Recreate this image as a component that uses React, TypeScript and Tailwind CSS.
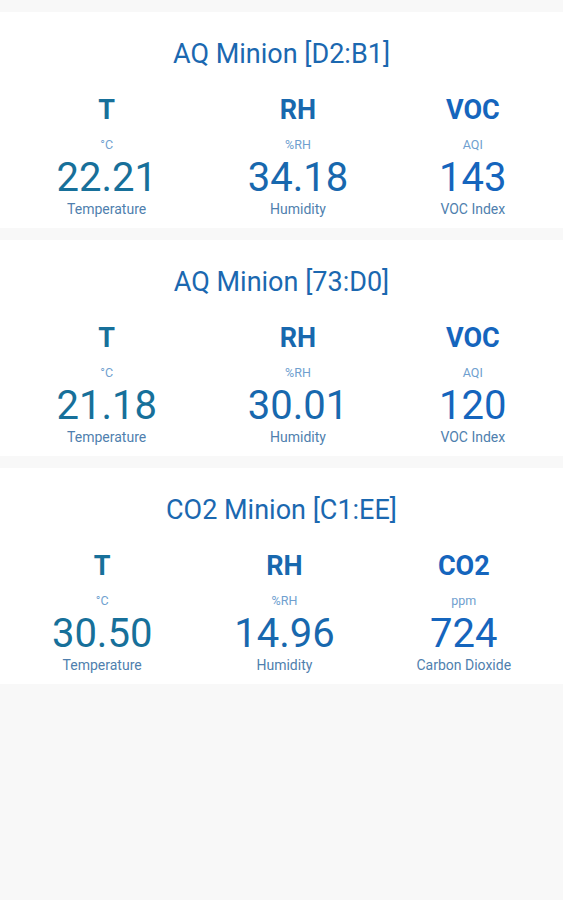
import React from "react";

type Metric = { name: string; unit: string; value: string; label: string; color: string };
type Device = { title: string; metrics: Metric[] };

const devices: Device[] = [
  {
    title: "AQ Minion [D2:B1]",
    metrics: [
      { name: "T", unit: "°C", value: "22.21", label: "Temperature", color: "teal" },
      { name: "RH", unit: "%RH", value: "34.18", label: "Humidity", color: "mid" },
      { name: "VOC", unit: "AQI", value: "143", label: "VOC Index", color: "blue" },
    ],
  },
  {
    title: "AQ Minion [73:D0]",
    metrics: [
      { name: "T", unit: "°C", value: "21.18", label: "Temperature", color: "teal" },
      { name: "RH", unit: "%RH", value: "30.01", label: "Humidity", color: "mid" },
      { name: "VOC", unit: "AQI", value: "120", label: "VOC Index", color: "blue" },
    ],
  },
  {
    title: "CO2 Minion [C1:EE]",
    metrics: [
      { name: "T", unit: "°C", value: "30.50", label: "Temperature", color: "teal" },
      { name: "RH", unit: "%RH", value: "14.96", label: "Humidity", color: "mid" },
      { name: "CO2", unit: "ppm", value: "724", label: "Carbon Dioxide", color: "blue" },
    ],
  },
];

function MetricCol({ m }: { m: Metric }) {
  const main =
    m.color === "teal" ? "text-[#17709a]" : m.color === "mid" ? "text-[#1868ae]" : "text-[#1565bd]";
  return (
    <div className="flex flex-col items-center">
      <div className={`text-[27px] leading-[27px] font-bold ${main}`}>{m.name}</div>
      <div className="mt-[14px] text-[12.5px] leading-[13px] text-[#6f9fcf]">{m.unit}</div>
      <div className={`mt-[7px] text-[40px] leading-[40px] ${main}`}>{m.value}</div>
      <div className="mt-[4px] text-[14px] leading-[14px] text-[#4f7fae]">{m.label}</div>
    </div>
  );
}

function Card({ d }: { d: Device }) {
  return (
    <div className="bg-white pt-[29px] pb-[12px] px-[11px]">
      <div className="text-center text-[27px] leading-[27px] text-[#1b68b0]">{d.title}</div>
      <div className="mt-[29px] flex justify-around">
        {d.metrics.map((m) => (
          <MetricCol key={m.name} m={m} />
        ))}
      </div>
    </div>
  );
}

export default function App() {
  return (
    <div
      className="min-h-[900px] w-full bg-[#f8f8f8] pt-[12px] flex flex-col gap-[12px]"
      style={{ fontFamily: "Roboto, 'Noto Sans', sans-serif" }}
    >
      {devices.map((d) => (
        <Card key={d.title} d={d} />
      ))}
    </div>
  );
}
